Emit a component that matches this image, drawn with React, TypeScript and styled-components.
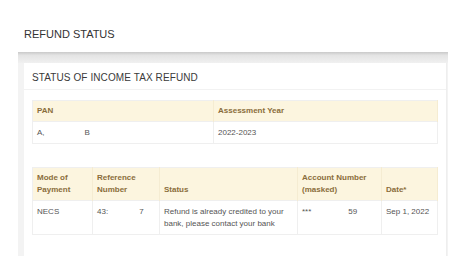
import React from "react";
import styled, { createGlobalStyle } from "styled-components";

const Global = createGlobalStyle`
  html, body {
    margin: 0;
    background: #fff;
    font-family: "Liberation Sans", Arial, sans-serif;
  }
`;

const Page = styled.div`
  padding: 0 26px 0 18px;
`;

const PageTitle = styled.h1`
  margin: 0;
  height: 52px;
  box-sizing: border-box;
  padding: 27px 0 0 6px;
  font-size: 11px;
  line-height: 14px;
  font-weight: normal;
  color: #333;
`;

const Panel = styled.div`
  display: flex;
  flex-direction: column;
`;

const Band = styled.div`
  height: 11px;
  background: linear-gradient(#c9c9c9, #e4e4e4 30%, #f0f0f0);
`;

const PanelBody = styled.div`
  display: flex;
  background: #f3f3f3;
  padding: 0 1px 0 6px;
`;

const Card = styled.div`
  flex: 1;
  background: #fff;
  border-right: 1px solid #eee;
  padding-bottom: 21px;
`;

const CardTitle = styled.div`
  height: 27px;
  box-sizing: border-box;
  padding: 8px 8px 0;
  font-size: 10px;
  line-height: 13px;
  letter-spacing: 0.1px;
  color: #3a3a3a;
  border-bottom: 1px solid #f2f2f2;
  margin-bottom: 10px;
`;

const Table = styled.table<{ $gap?: number }>`
  width: calc(100% - 16px);
  margin: 0 8px ${({ $gap }) => $gap ?? 0}px;
  border-collapse: collapse;
  table-layout: fixed;
  font-size: 8px;
  line-height: 12px;
  border: 1px solid #efefef;
`;

const Th = styled.th<{ $w?: number }>`
  box-sizing: border-box;
  ${({ $w }) => ($w ? `width: ${$w}px;` : "")}
  background: #fcf5df;
  color: #8a6d3b;
  font-weight: bold;
  text-align: left;
  vertical-align: bottom;
  padding: 4px;
  border-right: 1px solid #f5ecd2;
`;

const Td = styled.td`
  color: #555;
  vertical-align: top;
  padding: 5px 4px 4px;
  border-right: 1px solid #efefef;
  border-top: 1px solid #efefef;
`;

const Gap = styled.span<{ $w: number }>`
  display: inline-block;
  width: ${({ $w }) => $w}px;
`;

export default function App() {
  return (
    <>
      <Global />
      <Page>
        <PageTitle>REFUND STATUS</PageTitle>
        <Panel>
          <Band />
          <PanelBody>
            <Card>
              <CardTitle>STATUS OF INCOME TAX REFUND</CardTitle>
              <Table $gap={23}>
                <thead>
                  <tr>
                    <Th $w={181}>PAN</Th>
                    <Th>Assessment Year</Th>
                  </tr>
                </thead>
                <tbody>
                  <tr>
                    <Td>
                      A,<Gap $w={40} />B
                    </Td>
                    <Td>2022-2023</Td>
                  </tr>
                </tbody>
              </Table>
              <Table>
                <thead>
                  <tr>
                    <Th $w={60}>
                      Mode of
                      <br />
                      Payment
                    </Th>
                    <Th $w={67}>
                      Reference
                      <br />
                      Number
                    </Th>
                    <Th $w={138}>Status</Th>
                    <Th $w={84}>
                      Account Number
                      <br />
                      (masked)
                    </Th>
                    <Th>Date*</Th>
                  </tr>
                </thead>
                <tbody>
                  <tr>
                    <Td>NECS</Td>
                    <Td>
                      43:<Gap $w={31} />7
                    </Td>
                    <Td>
                      Refund is already credited to your bank, please contact
                      your bank
                    </Td>
                    <Td>
                      ***<Gap $w={37} />59
                    </Td>
                    <Td>Sep 1, 2022</Td>
                  </tr>
                </tbody>
              </Table>
            </Card>
          </PanelBody>
        </Panel>
      </Page>
    </>
  );
}
